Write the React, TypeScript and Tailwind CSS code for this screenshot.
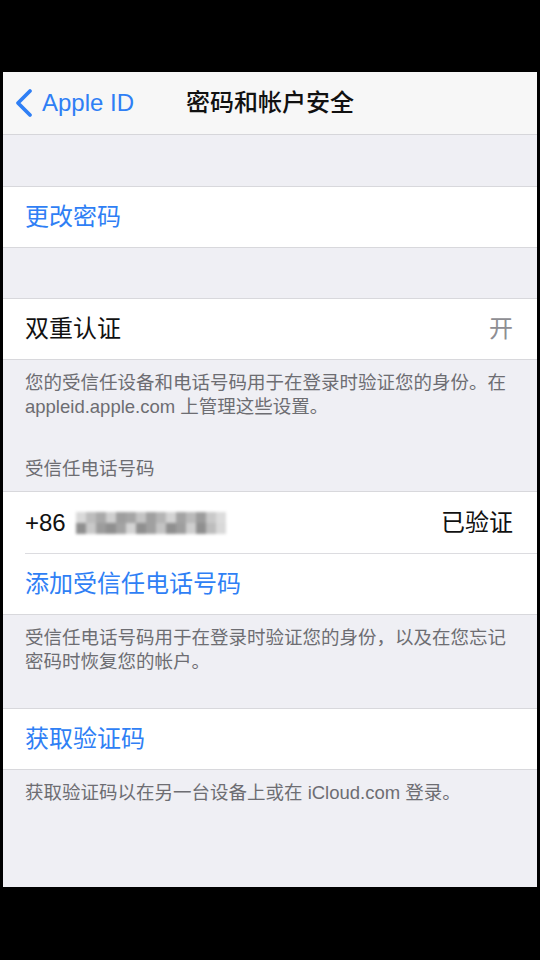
const font = "font-['Liberation_Sans','Noto_Sans_CJK_SC',sans-serif]";

const blurBlocks = [
  "bg-[#d9d9d9]", "bg-[#bdbdbd]", "bg-[#a9a9a9]", "bg-[#cfcfcf]", "bg-[#9e9e9e]",
  "bg-[#a5a5a5]", "bg-[#c4c4c4]", "bg-[#a0a0a0]", "bg-[#b5b5b5]", "bg-[#d4d4d4]",
  "bg-[#a3a3a3]", "bg-[#bababa]", "bg-[#9c9c9c]", "bg-[#c9c9c9]", "bg-[#dcdcdc]",
];

function Row({ children, right, blue }: { children: React.ReactNode; right?: React.ReactNode; blue?: boolean }) {
  return (
    <div className="flex h-[60px] items-center justify-between pl-[22px] pr-[24px]">
      <span className={`text-[24px] leading-none ${blue ? "text-[#2f7ff5]" : "text-[#111]"}`}>{children}</span>
      {right}
    </div>
  );
}

function Footer({ children }: { children: React.ReactNode }) {
  return <p className="px-[22px] pt-[11px] text-[18.5px] leading-[24px] text-[#6d6d72]">{children}</p>;
}

export default function App() {
  return (
    <div className={`h-[960px] bg-black pt-[72px] px-[3px] ${font}`}>
      <div className="flex h-[815px] flex-col bg-[#efeff4]">
        {/* Nav bar */}
        <div className="grid h-[63px] shrink-0 grid-cols-[1fr_auto_1fr] items-center border-b border-[#d6d6da] bg-[#f7f7f7]">
          <div className="flex items-center gap-[8px] pl-[11px] text-[#2f7ff5]">
            <svg width="20" height="30" viewBox="0 0 20 30" fill="none">
              <path d="M16 3 L4 15 L16 27" stroke="currentColor" strokeWidth="3.8" strokeLinecap="round" strokeLinejoin="round" />
            </svg>
            <span className="text-[24px] leading-none">Apple ID</span>
          </div>
          <h1 className="text-[24px] font-medium leading-none text-[#111]">密码和帐户安全</h1>
          <div />
        </div>

        <div className="h-[51px] shrink-0" />

        <div className="border-y border-[#d8d8dc] bg-white">
          <Row blue>更改密码</Row>
        </div>

        <div className="h-[50px] shrink-0" />

        <div className="border-y border-[#d8d8dc] bg-white">
          <Row right={<span className="text-[24px] leading-none text-[#8e8e93]">开</span>}>双重认证</Row>
        </div>
        <Footer>
          您的受信任设备和电话号码用于在登录时验证您的身份。在
          <br />
          appleid.apple.com 上管理这些设置。
        </Footer>

        <p className="px-[22px] pt-[38px] pb-[10px] text-[18.5px] leading-[24px] text-[#6d6d72]">受信任电话号码</p>

        <div className="border-y border-[#d8d8dc] bg-white">
          <div className="flex h-[61px] items-center justify-between pl-[22px] pr-[24px]">
            <div className="flex items-center">
              <span className="text-[24px] leading-none text-[#111]">+86</span>
              <div className="ml-[10px] grid grid-cols-[repeat(15,10px)] grid-rows-[11px_11px] blur-[1.5px]">
                {blurBlocks.map((c, i) => (
                  <span key={i} className={c} />
                ))}
                {blurBlocks.slice().reverse().map((c, i) => (
                  <span key={`b${i}`} className={i % 3 === 0 ? "bg-[#8f8f8f]" : c} />
                ))}
              </div>
            </div>
            <span className="text-[24px] leading-none text-[#111]">已验证</span>
          </div>
          <div className="ml-[22px] h-px bg-[#dcdce0]" />
          <Row blue>添加受信任电话号码</Row>
        </div>
        <Footer>
          受信任电话号码用于在登录时验证您的身份，以及在您忘记
          <br />
          密码时恢复您的帐户。
        </Footer>

        <div className="h-[34px] shrink-0" />

        <div className="border-y border-[#d8d8dc] bg-white">
          <Row blue>获取验证码</Row>
        </div>
        <Footer>获取验证码以在另一台设备上或在 iCloud.com 登录。</Footer>
      </div>
    </div>
  );
}
